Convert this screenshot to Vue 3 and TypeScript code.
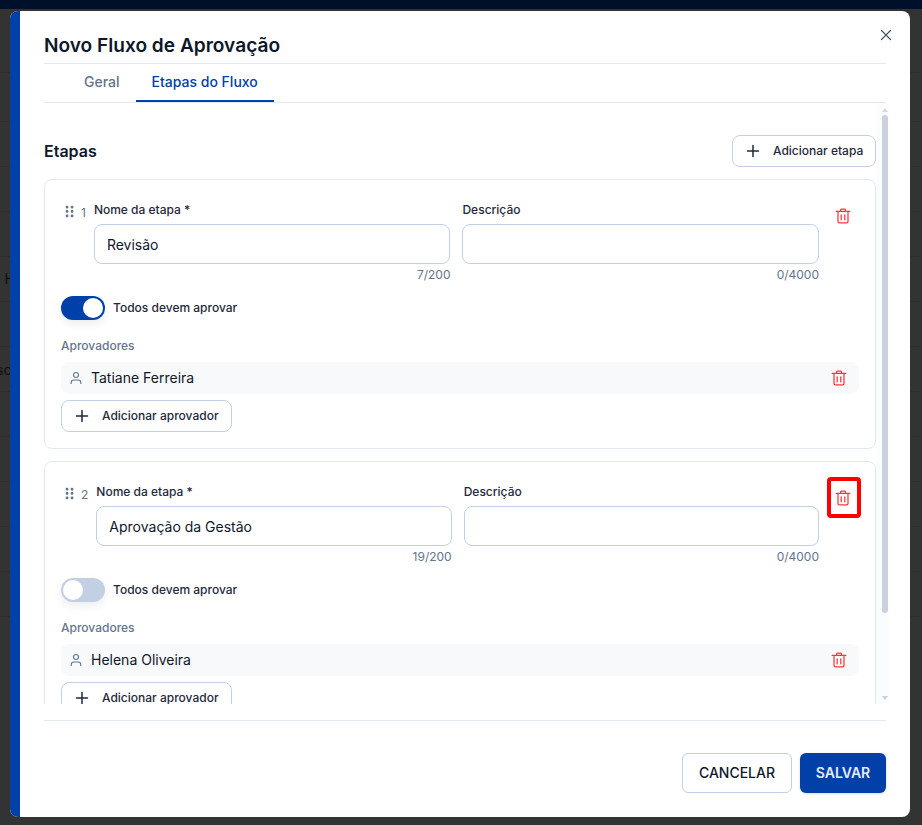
<script setup lang="ts">
import { ref } from 'vue'

interface Step {
  id: number
  name: string
  counter: string
  allApprove: boolean
  approver: string
  highlighted: boolean
}

const steps = ref<Step[]>([
  { id: 1, name: 'Revisão', counter: '7/200', allApprove: true, approver: 'Tatiane Ferreira', highlighted: false },
  { id: 2, name: 'Aprovação da Gestão', counter: '19/200', allApprove: false, approver: 'Helena Oliveira', highlighted: true },
])

const backdropRows = [64, 49, 45, 45, 45, 45, 45, 45, 45, 45, 45, 45, 45]
const activeTab = ref('etapas')
</script>

<template>
  <div class="page">
    <div class="topbar"></div>
    <div class="backdrop">
      <div v-for="(h, i) in backdropRows" :key="i" class="backdrop-row" :style="{ height: h + 'px' }"></div>
    </div>
    <span class="peek peek-a">e H</span>
    <span class="peek peek-b">sc</span>

    <div class="modal">
      <div class="accent"></div>
      <div class="modal-body">
        <h1 class="title">Novo Fluxo de Aprovação</h1>
        <button class="close" aria-label="Fechar">
          <svg width="16" height="16" viewBox="0 0 16 16" fill="none" stroke="#475569" stroke-width="1.2" stroke-linecap="round">
            <path d="M3.5 3.5l9 9M12.5 3.5l-9 9" />
          </svg>
        </button>

        <nav class="tabs">
          <a class="tab" :class="{ active: activeTab === 'geral' }">Geral</a>
          <a class="tab" :class="{ active: activeTab === 'etapas' }">Etapas do Fluxo</a>
        </nav>

        <div class="scroll-area">
          <div class="scroll-content">
            <div class="section-head">
              <h2 class="section-title">Etapas</h2>
              <button class="btn-outline btn-add-step">
                <svg class="plus" width="16" height="16" viewBox="0 0 16 16" fill="none" stroke="#1e293b" stroke-width="1.5" stroke-linecap="round">
                  <path d="M8 2.5v11M2.5 8h11" />
                </svg>
                Adicionar etapa
              </button>
            </div>

            <div v-for="step in steps" :key="step.id" class="card">
              <div class="step-top">
                <div class="handle">
                  <svg width="10" height="13" viewBox="0 0 10 13" fill="#64748b">
                    <rect x="0.7" y="0.7" width="2.7" height="2.7" rx="1" />
                    <rect x="5.7" y="0.7" width="2.7" height="2.7" rx="1" />
                    <rect x="0.7" y="5.1" width="2.7" height="2.7" rx="1" />
                    <rect x="5.7" y="5.1" width="2.7" height="2.7" rx="1" />
                    <rect x="0.7" y="9.5" width="2.7" height="2.7" rx="1" />
                    <rect x="5.7" y="9.5" width="2.7" height="2.7" rx="1" />
                  </svg>
                  <span class="step-number">{{ step.id }}</span>
                </div>
                <div class="fields">
                  <div class="field">
                    <label class="field-label">Nome da etapa *</label>
                    <input class="input" type="text" :value="step.name" />
                    <span class="counter">{{ step.counter }}</span>
                  </div>
                  <div class="field">
                    <label class="field-label">Descrição</label>
                    <input class="input" type="text" value="" />
                    <span class="counter">0/4000</span>
                  </div>
                </div>
                <button class="step-delete" :class="{ marked: step.highlighted }" aria-label="Excluir etapa">
                  <svg width="16" height="16" viewBox="0 0 16 16" fill="none" stroke="#f23a3a" stroke-width="1.25" stroke-linecap="round" stroke-linejoin="round">
                    <path d="M1.2 3.4h13.6M5.6 3.2V1.9c0-.4.3-.7.7-.7h3.4c.4 0 .7.3.7.7v1.3M3 3.4v10.1c0 .8.6 1.3 1.3 1.3h7.4c.7 0 1.3-.5 1.3-1.3V3.4M6.2 6.8v5M9.8 6.8v5" />
                  </svg>
                </button>
              </div>

              <div class="toggle-row">
                <span class="toggle" :class="{ on: step.allApprove }"><span class="knob"></span></span>
                <span class="toggle-label">Todos devem aprovar</span>
              </div>

              <div class="approvers-label">Aprovadores</div>
              <div class="approver">
                <svg class="user" width="14" height="14" viewBox="0 0 14 14" fill="none" stroke="#64748b" stroke-width="1.1" stroke-linecap="round">
                  <circle cx="7" cy="4" r="2.5" />
                  <path d="M2.2 12.5v-.8c0-1.6 1.3-2.7 2.8-2.7h4c1.5 0 2.8 1.1 2.8 2.7v.8" />
                </svg>
                <span class="approver-name">{{ step.approver }}</span>
                <svg class="approver-delete" width="16" height="16" viewBox="0 0 16 16" fill="none" stroke="#f23a3a" stroke-width="1.25" stroke-linecap="round" stroke-linejoin="round">
                  <path d="M1.2 3.4h13.6M5.6 3.2V1.9c0-.4.3-.7.7-.7h3.4c.4 0 .7.3.7.7v1.3M3 3.4v10.1c0 .8.6 1.3 1.3 1.3h7.4c.7 0 1.3-.5 1.3-1.3V3.4M6.2 6.8v5M9.8 6.8v5" />
                </svg>
              </div>
              <button class="btn-outline btn-add-approver">
                <svg class="plus" width="16" height="16" viewBox="0 0 16 16" fill="none" stroke="#1e293b" stroke-width="1.5" stroke-linecap="round">
                  <path d="M8 2.5v11M2.5 8h11" />
                </svg>
                Adicionar aprovador
              </button>
            </div>
          </div>

          <div class="scrollbar">
            <span class="arrow arrow-up"></span>
            <div class="thumb"></div>
            <span class="arrow arrow-down"></span>
          </div>
        </div>

        <footer class="footer">
          <button class="btn-cancel">CANCELAR</button>
          <button class="btn-save">SALVAR</button>
        </footer>
      </div>
    </div>
  </div>
</template>

<style>
html,
body {
  margin: 0;
  background: #333333;
}
</style>

<style scoped>
.page {
  position: relative;
  width: 922px;
  height: 825px;
  overflow: hidden;
  background: #333333;
  font-family: Inter, "Liberation Sans", sans-serif;
  color: #0f172a;
  padding-top: 11px;
  box-sizing: border-box;
}

.topbar {
  position: absolute;
  inset: 0 0 auto 0;
  height: 9px;
  background: #00102a;
}

.backdrop {
  position: absolute;
  inset: 9px 0 0 0;
}

.backdrop-row {
  box-sizing: border-box;
  border-bottom: 1px solid #2e2e2e;
}

.peek {
  position: absolute;
  font-size: 14px;
  line-height: 18px;
  color: #0f0f0f;
  text-align: right;
  white-space: nowrap;
}

.peek-a {
  left: -22px;
  width: 37px;
  top: 270px;
}

.peek-b {
  left: -4px;
  width: 14px;
  top: 361px;
}

.modal {
  position: relative;
  display: flex;
  width: 900px;
  height: 806px;
  margin-left: 10px;
  background: #ffffff;
  border-radius: 8px;
  overflow: hidden;
}

.accent {
  width: 10px;
  flex-shrink: 0;
  background: #0040a8;
}

.modal-body {
  position: relative;
  flex: 1;
  display: flex;
  flex-direction: column;
  padding: 0 24px 0 24px;
  min-width: 0;
}

.title {
  margin: 0;
  height: 53px;
  box-sizing: border-box;
  padding-top: 21px;
  font-size: 19.1px;
  line-height: 26px;
  font-weight: 600;
  color: #0f172a;
  border-bottom: 1px solid #e2e8f0;
}

.close {
  position: absolute;
  top: 16px;
  right: 16px;
  width: 16px;
  height: 16px;
  padding: 0;
  border: none;
  background: none;
  display: flex;
}

.tabs {
  display: flex;
  height: 39px;
  box-sizing: border-box;
  padding-left: 24px;
  border-bottom: 1px solid #e2e8f0;
}

.tab {
  height: 38px;
  box-sizing: border-box;
  padding: 0 16px;
  font-size: 14px;
  line-height: 36px;
  font-weight: 500;
  color: #64748b;
}

.tab.active {
  color: #0040a8;
  border-bottom: 2px solid #0040a8;
}

.scroll-area {
  display: flex;
  height: 601px;
  margin-right: -3px;
  overflow: hidden;
  flex-shrink: 0;
}

.scroll-content {
  width: 832px;
  flex-shrink: 0;
  padding-top: 32px;
}

.section-head {
  display: flex;
  align-items: center;
  justify-content: space-between;
  margin-bottom: 12px;
}

.section-title {
  margin: 0;
  font-size: 16px;
  font-weight: 600;
  color: #0f172a;
}

.btn-outline {
  display: flex;
  align-items: center;
  gap: 12px;
  height: 32px;
  box-sizing: border-box;
  padding: 0 12px 1px;
  background: #ffffff;
  border: 1px solid #c3cfe2;
  border-radius: 8px;
  font-family: inherit;
  font-size: 12px;
  font-weight: 500;
  white-space: nowrap;
  color: #1e293b;
}

.btn-add-step {
  width: 144px;
}

.btn-add-approver {
  width: 171px;
  margin-top: 6px;
}

.plus {
  flex-shrink: 0;
}

.card {
  box-sizing: border-box;
  height: 270px;
  margin-bottom: 12px;
  padding: 16px;
  border: 1px solid #e2e8f0;
  border-radius: 8px;
  background: #ffffff;
}

.step-top {
  display: flex;
  align-items: flex-start;
  height: 100px;
  padding: 7px 0 0 4px;
  box-sizing: border-box;
}

.handle {
  display: flex;
  align-items: flex-start;
  gap: 6px;
  padding-top: 2px;
  margin-right: 8px;
}

.step-number {
  font-size: 12px;
  line-height: 14px;
  margin-top: 1px;
  color: #64748b;
}

.fields {
  display: flex;
  flex: 1;
  gap: 12px;
  min-width: 0;
}

.field {
  flex: 1;
  min-width: 0;
  display: flex;
  flex-direction: column;
}

.field-label {
  font-size: 12px;
  line-height: 16px;
  font-weight: 500;
  color: #1e293b;
  margin-bottom: 6px;
  margin-top: -1px;
}

.input {
  height: 40px;
  box-sizing: border-box;
  width: 100%;
  padding: 0 12px;
  border: 1px solid #c3cfe2;
  border-radius: 8px;
  background: #ffffff;
  font-family: inherit;
  font-size: 14px;
  color: #0f172a;
  outline: none;
}

.counter {
  align-self: flex-end;
  margin-top: 4px;
  font-size: 12px;
  line-height: 14px;
  color: #64748b;
}

.step-delete {
  display: flex;
  align-items: center;
  justify-content: center;
  box-sizing: border-box;
  flex-shrink: 0;
  width: 34px;
  height: 41px;
  margin: -8px -2px 0 8px;
  padding: 0 2px 0 0;
  background: none;
  border: 4px solid transparent;
  border-radius: 4px;
}

.step-delete.marked {
  border-color: #ff0000;
}

.toggle-row {
  display: flex;
  align-items: center;
  gap: 8px;
  height: 24px;
}

.toggle {
  position: relative;
  width: 44px;
  height: 24px;
  box-sizing: border-box;
  border-radius: 12px;
  background: #c3cfe2;
  box-shadow: 0 4px 8px rgba(15, 23, 42, 0.08);
}

.toggle.on {
  background: #0040a8;
}

.knob {
  position: absolute;
  top: 2px;
  left: 2px;
  width: 20px;
  height: 20px;
  border-radius: 50%;
  background: #ffffff;
}

.toggle.on .knob {
  left: 22px;
}

.toggle-label {
  font-size: 12px;
  line-height: 14px;
  margin-top: -1px;
  font-weight: 500;
  color: #1e293b;
}

.approvers-label {
  margin-top: 18px;
  font-size: 12px;
  line-height: 16px;
  font-weight: 500;
  color: #64748b;
}

.approver {
  display: flex;
  align-items: center;
  height: 32px;
  margin-top: 8px;
  padding: 0 12px 0 8px;
  background: #f8f9fb;
  border-radius: 8px;
}

.user {
  margin: 0 8px 0 0;
  flex-shrink: 0;
}

.approver-name {
  flex: 1;
  font-size: 14px;
  line-height: 16px;
  color: #0f172a;
}

.approver-delete {
  flex-shrink: 0;
}

.scrollbar {
  position: relative;
  flex: 1;
  background: #fbfcfe;
}

.thumb {
  position: absolute;
  top: 12px;
  right: 1px;
  width: 6px;
  height: 498px;
  background: #cbd2dd;
  border-radius: 3px;
}

.arrow {
  position: absolute;
  right: 1px;
  width: 0;
  height: 0;
  border-left: 3px solid transparent;
  border-right: 3px solid transparent;
}

.arrow-up {
  top: 5px;
  border-bottom: 4px solid #d5dbe4;
}

.arrow-down {
  bottom: 4px;
  border-top: 4px solid #cbd2dd;
}

.footer {
  display: flex;
  justify-content: flex-end;
  gap: 8px;
  margin-top: 16px;
  padding-top: 32px;
  border-top: 1px solid #e2e8f0;
}

.btn-cancel,
.btn-save {
  height: 40px;
  box-sizing: border-box;
  padding: 0 0 2px;
  border-radius: 6px;
  font-family: inherit;
  font-size: 14px;
  font-weight: 500;
}

.btn-cancel {
  width: 110px;
  background: #ffffff;
  border: 1px solid #c3cfe2;
  color: #0f172a;
}

.btn-save {
  width: 86px;
  background: #0040a8;
  border: none;
  font-weight: 600;
  color: #e6ecf7;
  box-shadow: 0 1px 3px rgba(15, 23, 42, 0.15);
}
</style>
